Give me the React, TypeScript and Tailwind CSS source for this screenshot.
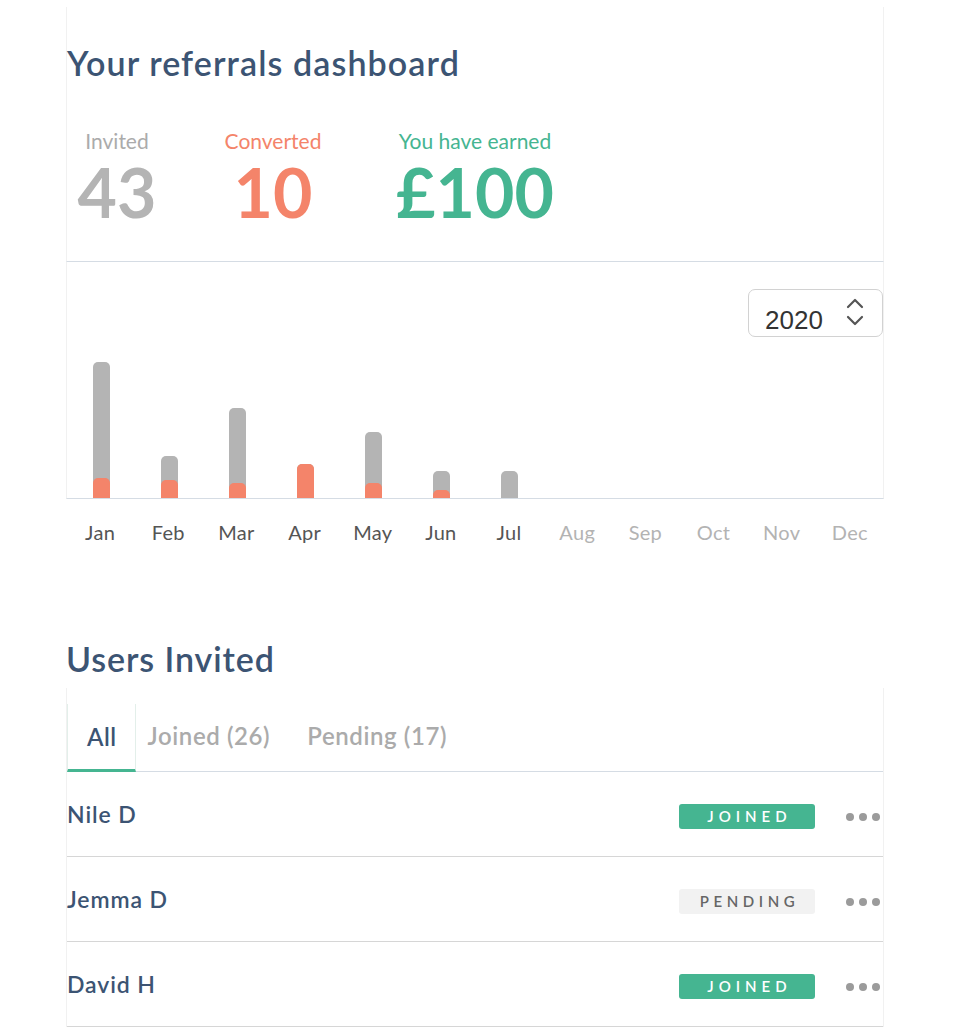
import React from "react";

const bars = [
  { m: "Jan", g: 136, o: 20, active: true },
  { m: "Feb", g: 42, o: 18, active: true },
  { m: "Mar", g: 90, o: 15, active: true },
  { m: "Apr", g: 34, o: 34, active: true },
  { m: "May", g: 66, o: 15, active: true },
  { m: "Jun", g: 27, o: 8, active: true },
  { m: "Jul", g: 27, o: 0, active: true },
  { m: "Aug", g: 0, o: 0, active: false },
  { m: "Sep", g: 0, o: 0, active: false },
  { m: "Oct", g: 0, o: 0, active: false },
  { m: "Nov", g: 0, o: 0, active: false },
  { m: "Dec", g: 0, o: 0, active: false },
];

const users = [
  { name: "Nile D", status: "JOINED" },
  { name: "Jemma D", status: "PENDING" },
  { name: "David H", status: "JOINED" },
];

function Dots() {
  return (
    <div className="flex items-center gap-[5px]">
      <span className="block w-[8px] h-[8px] rounded-full bg-[#9b9b9b]" />
      <span className="block w-[8px] h-[8px] rounded-full bg-[#9b9b9b]" />
      <span className="block w-[8px] h-[8px] rounded-full bg-[#9b9b9b]" />
    </div>
  );
}

export default function App() {
  return (
    <div className="min-h-screen bg-white font-['Lato','Noto_Sans',sans-serif]">
      <div className="ml-[66px] w-[818px] pt-[7px]">
        {/* Top card */}
        <div className="border-x border-x-[#f1f1f1] border-b border-b-[#d5dce4] pt-[39px] pb-[35px]">
          <h1 className="text-[34px] leading-none font-semibold tracking-[1.1px] text-[#3c5473]">
            Your referrals dashboard
          </h1>
          <div className="flex mt-[50px]">
            <div className="w-[100px] ml-0 text-center">
              <div className="text-[21px] leading-none text-[#ababab]">Invited</div>
              <div className="mt-[7px] text-[68px] leading-none font-bold text-[#b4b4b4]">43</div>
            </div>
            <div className="w-[100px] ml-[56px] text-center">
              <div className="text-[21px] leading-none text-[#f4846a]">Converted</div>
              <div className="mt-[7px] text-[68px] leading-none font-bold text-[#f4846a]">10</div>
            </div>
            <div className="w-[180px] ml-[62px] text-center">
              <div className="text-[21px] leading-none text-[#45b591]">You have earned</div>
              <div className="mt-[7px] text-[68px] leading-none font-bold text-[#45b591]">£100</div>
            </div>
          </div>
        </div>

        {/* Chart */}
        <div className="h-[237px] flex flex-col border-x border-x-[#f1f1f1] border-b border-b-[#d5dce4]">
          <div className="flex justify-end mt-[27px]">
            <div className="w-[135px] h-[48px] border border-[#d2d2d2] rounded-[7px] flex items-center pl-[16px] pr-[18px] justify-between">
              <span className="pt-[14px] text-[26px] leading-none text-[#333333] font-['Liberation_Sans',sans-serif]">2020</span>
              <svg width="18" height="28" viewBox="0 0 18 28" fill="none" className="mb-[2px]">
                <path d="M2 9 L9 2 L16 9" stroke="#555555" strokeWidth="2.2" strokeLinecap="round" strokeLinejoin="round" />
                <path d="M2 19 L9 26 L16 19" stroke="#555555" strokeWidth="2.2" strokeLinecap="round" strokeLinejoin="round" />
              </svg>
            </div>
          </div>
          <div className="flex-1 grid grid-cols-12 items-end">
            {bars.map((b) => (
              <div key={b.m} className="flex justify-center items-end h-full">
                {b.g > 0 && (
                  <div className="relative w-[17px] rounded-t-[5px] bg-[#b4b4b4]" style={{ height: b.g }}>
                    {b.o > 0 && (
                      <div className="absolute bottom-0 left-0 w-full rounded-t-[5px] bg-[#f4846a]" style={{ height: b.o }} />
                    )}
                  </div>
                )}
              </div>
            ))}
          </div>
        </div>

        {/* Month labels */}
        <div className="grid grid-cols-12 mt-[23px]">
          {bars.map((b) => (
            <div
              key={b.m}
              className={b.active ? "text-center text-[20px] leading-none tracking-[0.3px] text-[#555555]" : "text-center text-[20px] leading-none tracking-[0.3px] text-[#b3b3b3]"}
            >
              {b.m}
            </div>
          ))}
        </div>

        {/* Users Invited */}
        <h2 className="mt-[100px] text-[34px] leading-none font-semibold tracking-[0.9px] text-[#3c5473]">Users Invited</h2>

        <div className="mt-[12px] border-x border-x-[#f1f1f1]">
          <div className="pt-[16px] flex border-b border-b-[#d5dce4]">
            <div className="h-[68px] -mb-px flex items-center pl-[19px] pr-[18px] border-x border-x-[#e3efea] border-b-[3px] border-b-[#45b591] text-[24px] leading-none font-semibold tracking-[0.5px] text-[#3c5473]">
              All
            </div>
            <div className="h-[67px] flex items-center pl-[12px] pr-[19px] pb-[3px] text-[24px] leading-none font-semibold tracking-[0.6px] text-[#ababab]">
              Joined (26)
            </div>
            <div className="h-[67px] flex items-center pl-[18px] pb-[3px] text-[24px] leading-none font-semibold tracking-[0.6px] text-[#ababab]">
              Pending (17)
            </div>
          </div>
          {users.map((u) => (
            <div key={u.name} className="h-[85px] flex items-center border-b border-b-[#d6d6d6] pr-[3px]">
              <div className="flex-1 text-[23px] leading-none font-semibold tracking-[0.9px] text-[#3c5473]">{u.name}</div>
              <div
                className={
                  u.status === "JOINED"
                    ? "w-[136px] h-[25px] rounded-[3px] bg-[#45b591] text-white flex items-center justify-center text-[15px] font-semibold tracking-[5px] pl-[5px] mt-[4px]"
                    : "w-[136px] h-[25px] rounded-[3px] bg-[#f2f2f2] text-[#666666] flex items-center justify-center text-[15px] font-semibold tracking-[4.6px] pl-[5px] mt-[4px]"
                }
              >
                {u.status}
              </div>
              <div className="ml-[31px] mt-[6px]">
                <Dots />
              </div>
            </div>
          ))}
        </div>
      </div>
    </div>
  );
}
